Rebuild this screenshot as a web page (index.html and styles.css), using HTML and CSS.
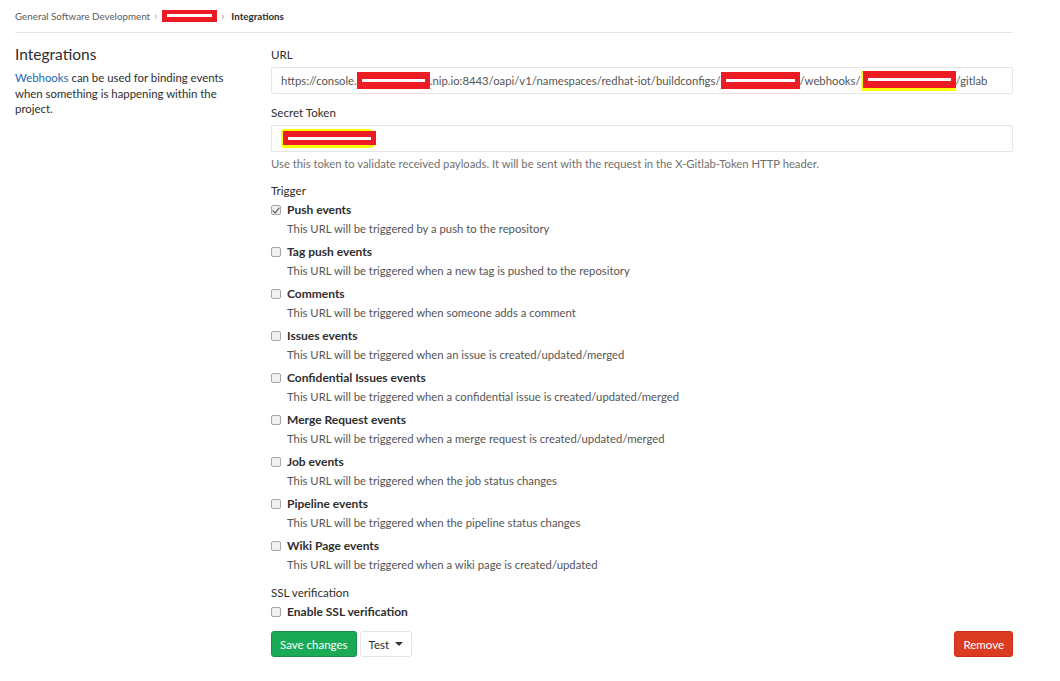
FILE: index.html
```html
<!DOCTYPE html>
<html lang="en">
<head>
    <meta charset="UTF-8">
    <title>Integrations</title>
    <link rel="stylesheet" href="styles.css">
</head>
<body>
    <div class="page">
        <div class="breadcrumbs">
            <span class="crumb">General Software Development</span>
            <span class="sep">&#8250;</span>
            <span class="redact crumb-redact"><i></i></span>
            <span class="sep">&#8250;</span>
            <span class="crumb current">Integrations</span>
        </div>

        <div class="row">
            <div class="side">
                <h4>Integrations</h4>
                <p class="side-text"><a href="#">Webhooks</a> can be used for binding events when something is happening within the project.</p>
            </div>

            <form class="main">
                <div class="field">
                    <label class="field-label">URL</label>
                    <div class="input">https://console.<span class="redact r1"><i></i></span>.nip.io:8443/oapi/v1/namespaces/redhat-iot/buildconfigs/<span class="redact r2"><i></i></span>/webhooks/<span class="hl"><span class="redact r3"><i></i></span></span>/gitlab</div>
                </div>
                <div class="field">
                    <label class="field-label">Secret Token</label>
                    <div class="input"><span class="hl token-hl"><span class="redact r4"><i></i></span></span></div>
                    <p class="help">Use this token to validate received payloads. It will be sent with the request in the X-Gitlab-Token HTTP header.</p>
                </div>

                <div class="field">
                    <label class="field-label trigger-label">Trigger</label>
                    <ul class="triggers">
                        <li>
                            <label class="check"><span class="box checked"></span>Push events</label>
                            <p class="desc">This URL will be triggered by a push to the repository</p>
                        </li>
                        <li>
                            <label class="check"><span class="box"></span>Tag push events</label>
                            <p class="desc">This URL will be triggered when a new tag is pushed to the repository</p>
                        </li>
                        <li>
                            <label class="check"><span class="box"></span>Comments</label>
                            <p class="desc">This URL will be triggered when someone adds a comment</p>
                        </li>
                        <li>
                            <label class="check"><span class="box"></span>Issues events</label>
                            <p class="desc">This URL will be triggered when an issue is created/updated/merged</p>
                        </li>
                        <li>
                            <label class="check"><span class="box"></span>Confidential Issues events</label>
                            <p class="desc">This URL will be triggered when a confidential issue is created/updated/merged</p>
                        </li>
                        <li>
                            <label class="check"><span class="box"></span>Merge Request events</label>
                            <p class="desc">This URL will be triggered when a merge request is created/updated/merged</p>
                        </li>
                        <li>
                            <label class="check"><span class="box"></span>Job events</label>
                            <p class="desc">This URL will be triggered when the job status changes</p>
                        </li>
                        <li>
                            <label class="check"><span class="box"></span>Pipeline events</label>
                            <p class="desc">This URL will be triggered when the pipeline status changes</p>
                        </li>
                        <li>
                            <label class="check"><span class="box"></span>Wiki Page events</label>
                            <p class="desc">This URL will be triggered when a wiki page is created/updated</p>
                        </li>
                    </ul>
                </div>

                <div class="field ssl">
                    <label class="field-label">SSL verification</label>
                    <label class="check"><span class="box"></span>Enable SSL verification</label>
                </div>

                <div class="actions">
                    <button type="button" class="btn btn-save">Save changes</button>
                    <button type="button" class="btn btn-test">Test <span class="caret"></span></button>
                    <button type="button" class="btn btn-remove">Remove</button>
                </div>
            </form>
        </div>
    </div>
</body>
</html>
```

FILE: styles.css
```css
* {
    margin: 0;
    padding: 0;
    box-sizing: border-box;
}
body {
    background: #fff;
    color: #2e2e2e;
    font-family: Lato, "Open Sans", sans-serif;
    font-size: 12px;
}
ul,li{
    list-style: none;
}
.page{
    width: 1013px;
    padding-left: 15px;
}
.breadcrumbs{
    display: flex;
    align-items: center;
    height: 33px;
    border-bottom: 1px solid #e5e5e5;
    font-size: 9.8px;
    color: #5c5c5c;
    padding-bottom: 1px;
}
.breadcrumbs .sep{
    color: #a0a0a0;
    margin: 0 5px 0 4px;
    font-size: 11px;
}
.breadcrumbs .current{
    color: #2e2e2e;
    font-weight: 700;
    margin-left: 2px;
}

/* redaction marks */
.redact{
    display: inline-flex;
    align-items: center;
    justify-content: center;
    background: #ed1c24;
    vertical-align: middle;
    height: 17px;
}
.redact i{
    display: block;
    background: #fff;
    height: 3px;
    width: calc(100% - 10px);
}
.crumb-redact{
    width: 55px;
    height: 12px;
}
.r1{ width: 73px; }
.r2{ width: 79px; }
.r3{ width: 93px; }
.r4{ width: 93px; height: 14px; }
.hl{
    display: inline-block;
    background: #ffff00;
    padding: 0 0 3px 2px;
    vertical-align: middle;
    line-height: 0;
}
.token-hl{
    padding: 2px 0 3px 2px;
    border-radius: 4px 8px 6px 3px;
}

.row{
    display: flex;
    gap: 31px;
    padding-top: 12px;
}
.side{
    width: 225px;
    flex: none;
}
.side h4{
    font-size: 15.5px;
    font-weight: 400;
    line-height: 20px;
    margin-top: -1px;
    margin-bottom: 6px;
    color: #2e2e2e;
}
.side-text{
    font-size: 11.4px;
    line-height: 15.5px;
}
.side-text a{
    color: #1b69b6;
    text-decoration: none;
}

.main{
    flex: 1;
    min-width: 0;
}
.field{
    margin-bottom: 10px;
}
.field-label{
    display: block;
    font-weight: 400;
    font-size: 11.6px;
    line-height: 18px;
    margin-bottom: 3px;
    margin-top: 1px;
}
.trigger-label{
    margin-bottom: 0;
}
.input{
    height: 27px;
    border: 1px solid #e5e5e5;
    border-radius: 2px;
    padding: 0 9px;
    display: flex;
    align-items: center;
    font-size: 11.3px;
    color: #555;
    white-space: nowrap;
    overflow: hidden;
}
.help{
    color: #707070;
    font-size: 11.25px;
    margin-top: 4px;
    line-height: 16px;
}
.triggers li{
    margin-bottom: 4px;
}
.check{
    display: flex;
    align-items: center;
    font-weight: 700;
    font-size: 12px;
    line-height: 19px;
    color: #2e2e2e;
}
.box{
    width: 10px;
    height: 10px;
    border: 1px solid #a6a6a6;
    background: #f0f0f0;
    border-radius: 2px;
    margin-right: 6px;
    position: relative;
}
.box.checked::after{
    content: "";
    position: absolute;
    left: 2px;
    top: 0px;
    width: 3px;
    height: 6px;
    border: solid #444;
    border-width: 0 1.5px 1.5px 0;
    transform: rotate(40deg);
}
.desc{
    color: #555;
    font-size: 11.3px;
    line-height: 19px;
    padding-left: 16px;
}
.ssl{
    margin-top: 2px;
}
.ssl .field-label{
    margin-bottom: 0;
}

.actions{
    display: flex;
    gap: 3px;
    margin-top: 10px;
}
.btn{
    height: 26px;
    border-radius: 3px;
    font-family: inherit;
    font-size: 11.5px;
    padding: 0 8px;
    border: 1px solid #e5e5e5;
    background: #fff;
    color: #2e2e2e;
}
.btn-save{
    background: #1aaa55;
    border-color: #168f48;
    color: #fff;
}
.btn-test{
    display: flex;
    align-items: center;
    gap: 6px;
    padding: 0 8px 0 8px;
}
.caret{
    width: 0;
    height: 0;
    border-left: 4px solid transparent;
    border-right: 4px solid transparent;
    border-top: 4px solid #333;
}
.btn-remove{
    margin-left: auto;
    background: #db3b21;
    border-color: #d22f1a;
    color: #fff;
}
```
